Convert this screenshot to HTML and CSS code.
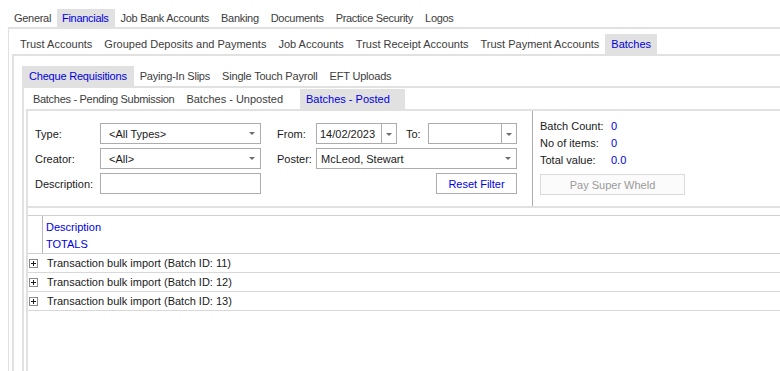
FILE: index.html
```html
<!DOCTYPE html>
<html>
<head>
<meta charset="utf-8">
<link rel="stylesheet" href="styles.css">
</head>
<body>
<div class="app">
  <div class="tabs l1">
    <span class="tab">General</span>
    <span class="tab sel">Financials</span>
    <span class="tab">Job Bank Accounts</span>
    <span class="tab">Banking</span>
    <span class="tab">Documents</span>
    <span class="tab">Practice Security</span>
    <span class="tab">Logos</span>
  </div>
  <div class="panel p1">
    <div class="tabs l2">
      <span class="tab">Trust Accounts</span>
      <span class="tab">Grouped Deposits and Payments</span>
      <span class="tab">Job Accounts</span>
      <span class="tab">Trust Receipt Accounts</span>
      <span class="tab">Trust Payment Accounts</span>
      <span class="tab sel">Batches</span>
    </div>
    <div class="panel p2">
      <div class="tabs l3">
        <span class="tab sel">Cheque Requisitions</span>
        <span class="tab">Paying-In Slips</span>
        <span class="tab">Single Touch Payroll</span>
        <span class="tab">EFT Uploads</span>
      </div>
      <div class="panel p3">
        <div class="tabs l4">
          <span class="tab">Batches - Pending Submission</span>
          <span class="tab">Batches - Unposted</span>
          <span class="tab sel">Batches - Posted</span>
        </div>
        <div class="panel p4">
          <div class="filter">
            <div class="fields">
              <div class="row">
                <span class="lbl w65">Type:</span>
                <div class="combo w161"><span class="val pl8">&lt;All Types&gt;</span><span class="arrow"></span></div>
                <span class="lbl w39 ml16">From:</span>
                <div class="combo split w81"><span class="val">14/02/2023</span><span class="btn"><span class="arrow"></span></span></div>
                <span class="lbl w22 ml9">To:</span>
                <div class="combo split w89"><span class="val"></span><span class="btn"><span class="arrow"></span></span></div>
              </div>
              <div class="row">
                <span class="lbl w65">Creator:</span>
                <div class="combo w161"><span class="val pl8">&lt;All&gt;</span><span class="arrow"></span></div>
                <span class="lbl w39 ml16">Poster:</span>
                <div class="combo w201"><span class="val pl4">McLeod, Stewart</span><span class="arrow"></span></div>
              </div>
              <div class="row">
                <span class="lbl w65">Description:</span>
                <div class="combo w161"></div>
                <button class="button reset">Reset Filter</button>
              </div>
            </div>
            <div class="stats">
              <div class="stat"><span class="slbl">Batch Count:</span><span class="sval">0</span></div>
              <div class="stat"><span class="slbl">No of items:</span><span class="sval">0</span></div>
              <div class="stat"><span class="slbl">Total value:</span><span class="sval">0.0</span></div>
              <button class="button disabled">Pay Super Wheld</button>
            </div>
          </div>
          <div class="grid">
            <div class="ghead">
              <div class="ind"></div>
              <div class="hcell">
                <div class="hl1">Description</div>
                <div class="hl2">TOTALS</div>
              </div>
            </div>
            <div class="grow"><span class="plus"></span><span class="cell">Transaction bulk import (Batch ID: 11)</span></div>
            <div class="grow"><span class="plus"></span><span class="cell">Transaction bulk import (Batch ID: 12)</span></div>
            <div class="grow"><span class="plus"></span><span class="cell">Transaction bulk import (Batch ID: 13)</span></div>
          </div>
        </div>
      </div>
    </div>
  </div>
</div>
</body>
</html>
```
FILE: styles.css
```css
* { box-sizing: border-box; }
html, body { margin: 0; padding: 0; background: #fff; }
body {
  font-family: "Liberation Sans", Arial, sans-serif;
  font-size: 11px;
  color: #1a1a1a;
  width: 780px;
  height: 371px;
  overflow: hidden;
}
.app { padding-left: 8px; width: 900px; height: 371px; display: flex; flex-direction: column; }
.tabs { display: flex; white-space: nowrap; }
.tab { display: block; padding: 0 6px; color: #3c3c3c; }
.tab.sel { background: #e1e1e1; color: #0000e0; }
.l1 { padding-top: 9px; }
.l1 .tab { height: 18px; line-height: 19px; letter-spacing: -0.3px; }
.l1 .tab.sel { padding: 0 6px 0 5px; }
.panel { border-left: 2px solid #e1e1e1; border-top: 2px solid #e1e1e1; flex: 1; display: flex; flex-direction: column; }
.p1 { border-left-width: 1px; padding-left: 3px; padding-top: 5px; }
.l2 { padding-left: 2px; }
.l2 .tab { height: 20px; line-height: 20px; }
.p2 { padding-left: 8px; padding-top: 10px; }
.l3 .tab { height: 20px; line-height: 20px; letter-spacing: -0.2px; }
.l3 .tab:first-child { padding: 0 7px 0 7px; }
.p3 { padding-left: 2px; padding-top: 1px; }
.l4 { padding-left: 1px; border-bottom: 2px solid #e1e1e1; }
.l4 .tab { height: 20px; line-height: 20px; }
.l4 .tab:first-child { letter-spacing: -0.3px; }
.l4 .tab.sel { padding: 0 15px 0 6px; margin-left: 11px; }
.p4 { border-top: none; border-left: 2px solid #e1e1e1; }

.filter { display: flex; height: 97px; border-bottom: 2px solid #e1e1e1; flex: none; }
.fields { width: 504px; padding: 12px 0 0 7px; display: flex; flex-direction: column; gap: 4px; }
.row { display: flex; align-items: center; height: 21px; }
.lbl { display: block; white-space: nowrap; color: #1a1a1a; }
.w65 { width: 65px; } .w39 { width: 39px; } .w22 { width: 22px; }
.ml16 { margin-left: 16px; } .ml9 { margin-left: 9px; }
.combo { height: 21px; border: 1px solid #acacac; display: flex; align-items: center; background: #fff; }
.w161 { width: 161px; } .w81 { width: 81px; } .w89 { width: 89px; } .w201 { width: 201px; }
.combo .val { flex: 1; padding-left: 3px; color: #1a1a1a; white-space: nowrap; }
.combo .val.pl8 { padding-left: 8px; }
.combo .val.pl4 { padding-left: 4px; }
.arrow { display: block; width: 0; height: 0; border-left: 3px solid transparent; border-right: 3px solid transparent; border-top: 3px solid #6d6d6d; margin-right: 5px; }
.split .btn { width: 15px; height: 100%; border-left: 1px solid #acacac; display: flex; align-items: center; justify-content: center; }
.split .btn .arrow { margin: 2px 0 0 0; }
.button { font-family: inherit; font-size: 11px; height: 21px; padding: 0; border: 1px solid #acacac; background: #fff; }
.reset { width: 81px; margin-left: 175px; color: #0000e0; }
.stats { border-left: 1px solid #ababab; flex: 1; padding: 7px 0 0 7px; }
.stat { display: flex; height: 17px; line-height: 17px; }
.slbl { width: 71px; color: #1a1a1a; }
.sval { color: #0000e0; }
.disabled { width: 145px; margin-top: 5px; border-color: #dadada; background: #fbfbfb; color: #9a9a9a; }

.grid { margin-top: 7px; border-top: 1px solid #cfcfcf; flex: 1; }
.ghead { display: flex; border-bottom: 1px solid #cfcfcf; height: 38px; }
.ind { width: 15px; border-right: 1px solid #b8b8b8; }
.hcell { padding: 2px 0 0 3px; color: #0000e0; }
.hl1 { height: 18px; line-height: 18px; }
.hl2 { height: 17px; line-height: 17px; }
.grow { display: flex; align-items: center; height: 19px; border-bottom: 1px solid #d8d8d8; }
.plus { width: 9px; height: 9px; border: 1px solid #8a8a8a; margin-left: 1px; position: relative; flex: none; }
.plus::before { content: ""; position: absolute; left: 1px; top: 3px; width: 5px; height: 1px; background: #1a1a1a; }
.plus::after { content: ""; position: absolute; left: 3px; top: 1px; width: 1px; height: 5px; background: #1a1a1a; }
.cell { margin-left: 9px; white-space: nowrap; color: #1a1a1a; }
```
